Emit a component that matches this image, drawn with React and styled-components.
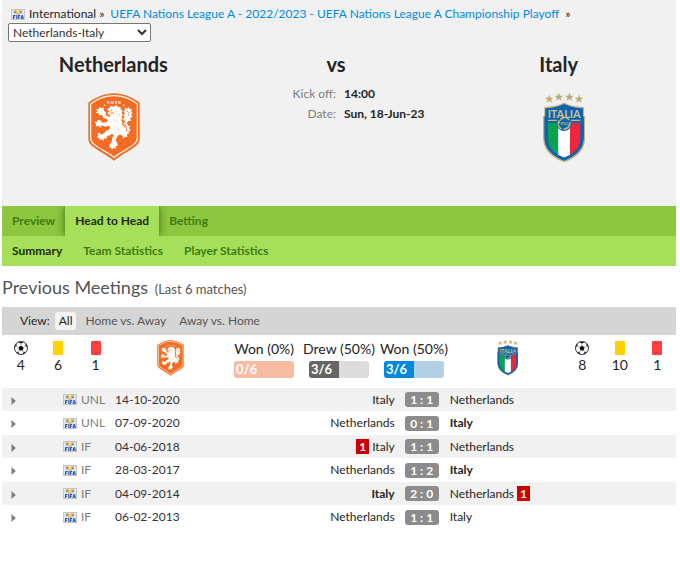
import { useState } from 'react';
import styled, { createGlobalStyle } from 'styled-components';

const GlobalStyle = createGlobalStyle`
  * {
    box-sizing: border-box;
  }

  body {
    margin: 0;
    padding: 0 4px 0 2px;
    background: #fff;
    color: #242424;
    font: 12px/16px Lato, 'Open Sans', sans-serif;
  }

  button,
  select {
    font: inherit;
  }
`;

const Header = styled.header`
  min-height: 206px;
  padding-top: 6px;
  background: #f1f1f1;
`;

const Breadcrumb = styled.nav`
  display: flex;
  align-items: center;
  gap: 4px;
  padding-left: 9px;
  white-space: nowrap;
`;

const CrumbLink = styled.a`
  padding: 0 2px;
  color: #0089dd;
  text-decoration: none;
`;

const MatchSelect = styled.select`
  display: block;
  width: 143px;
  height: 19px;
  margin: 1px 0 0 6px;
  padding: 0;
  border: 1px solid #767676;
  border-radius: 2px;
  background: #fff;
  color: #333;
`;

const Teams = styled.div`
  display: grid;
  grid-template-columns: repeat(3, 1fr);
  padding: 10px 6px 0 0;
  text-align: center;
`;

const TeamName = styled.h2`
  margin: 0 0 17px;
  font-size: 20px;
  line-height: 24px;
  font-weight: 700;
`;

const Badge = styled.div`
  padding-left: ${({ $away }) => ($away ? '10px' : '2px')};
`;

const Versus = styled.h2`
  margin: 0 0 8px;
  font-size: 20px;
  line-height: 24px;
`;

const Info = styled.dl`
  display: grid;
  grid-template-columns: 1fr 1fr;
  margin: 0;
  line-height: 20px;

  dt {
    color: #7c7c7c;
    text-align: right;
  }

  dd {
    margin: 0;
    padding-left: 8px;
    font-weight: 700;
    text-align: left;
    white-space: nowrap;
  }
`;

const Tabs = styled.nav`
  display: flex;
  height: 30px;
  background: #8dc63f;
`;

const Tab = styled.a`
  padding: 0 10px;
  line-height: 30px;
  font-weight: 700;
  text-decoration: none;
  color: ${({ $active }) => ($active ? '#1c2a0c' : '#3f7a10')};
  background: ${({ $active }) => ($active ? '#a6e05a' : 'transparent')};
  box-shadow: ${({ $active }) =>
    $active ? '0 0 8px rgba(30, 70, 0, 0.7)' : 'none'};
  clip-path: inset(0 -10px);
`;

const SubTabs = styled(Tabs)`
  position: relative;
  background: #a6e05a;
`;

const SubTab = styled(Tab)`
  padding: 0 11px 0 10px;
  background: none;
  box-shadow: none;
`;

const Title = styled.h1`
  margin: 9px 0 6px;
  font-size: 18px;
  line-height: 24px;
  font-weight: 400;
  color: #555;

  small {
    margin-left: 2px;
    font-size: 13px;
  }
`;

const ViewBar = styled.div`
  display: flex;
  align-items: center;
  gap: 5px;
  height: 28px;
  padding-left: 18px;
  background: #d5d5d5;
`;

const ViewButton = styled.button`
  height: 18px;
  padding: 0 4px;
  border: 0;
  border-radius: 3px;
  line-height: 18px;
  background: ${({ $active }) => ($active ? '#f4f4f4' : 'transparent')};
  color: ${({ $active }) => ($active ? '#242424' : '#555')};
  cursor: pointer;
`;

const Stats = styled.section`
  display: grid;
  grid-template-columns: 1fr 1fr 2fr 1fr 1fr;
  height: 53px;
  padding-top: 5px;
  text-align: center;
`;

const Thirds = styled.div`
  display: grid;
  grid-template-columns: repeat(3, 1fr);
`;

const Count = styled.div`
  display: flex;
  flex-direction: column;
  align-items: center;
  font-size: 14px;
  line-height: 20px;

  svg {
    margin-top: 1px;
  }
`;

const Card = styled.span`
  width: 10px;
  height: 14px;
  margin-top: 1px;
  border-radius: 1px;
  background: ${({ color }) => color};
`;

const Outcome = styled.div`
  display: flex;
  flex-direction: column;
  align-items: center;
  gap: 3px;
  font-size: 14px;
  line-height: 18px;
  white-space: nowrap;
`;

const Bar = styled.div`
  width: 60px;
  height: 17px;
  border-radius: 3px;
  overflow: hidden;
  background: ${({ $track }) => $track};
`;

const Fill = styled.div`
  height: 17px;
  padding-left: 2px;
  font-size: 13px;
  line-height: 16px;
  font-weight: 700;
  text-align: left;
  color: #fff;
  background: ${({ $fill }) => $fill};
`;

const Matches = styled.table`
  width: 100%;
  table-layout: fixed;
  border-collapse: collapse;

  tr {
    height: 24px;
  }

  tr:nth-child(odd) {
    height: 23px;
    background: #f1f1f1;
  }

  td {
    padding: 0;
    white-space: nowrap;
  }
`;

const Col = styled.col`
  width: ${({ $width }) => $width};
`;

const Expand = styled.button`
  display: block;
  height: 16px;
  padding: 1px 0 0 9px;
  border: 0;
  background: none;
  cursor: pointer;
`;

const Competition = styled.div`
  display: flex;
  align-items: center;
  gap: 4px;
  padding-left: 2px;
  color: #7c7c7c;
`;

const DateCell = styled.td`
  color: #333;
`;

const Side = styled.div`
  display: flex;
  align-items: center;
  justify-content: ${({ $home }) => ($home ? 'flex-end' : 'flex-start')};
  gap: 3px;
  padding: ${({ $home }) => ($home ? '0 3px 0 0' : '0')};
  font-weight: ${({ $winner }) => ($winner ? 700 : 400)};
`;

const RedCard = styled.span`
  width: 13px;
  height: 15px;
  line-height: 15px;
  text-align: center;
  font-weight: 700;
  color: #fff;
  background: #c00;
`;

const Score = styled.div`
  width: 34px;
  height: 15px;
  margin-left: 7px;
  border-radius: 3px;
  line-height: 15px;
  font-weight: 700;
  text-align: center;
  color: #fff;
  background: #8c8c8c;
`;

const FifaIcon = () => (
  <svg width="14" height="11" viewBox="0 0 14 11" aria-hidden="true">
    <rect x=".5" y=".5" width="13" height="10" fill="#dfe6f0" stroke="#c3c6cc" />
    <circle cx="4.5" cy="2.8" r="1.9" fill="#f0b92f" />
    <circle cx="9.3" cy="2.8" r="1.9" fill="#f0b92f" />
    <path d="M3 2.2h2v1.6H3zM9 2.5h2V4H9z" fill="#5c95d3" />
    <path d="M5.5 4.5h3v1h-3z" fill="#e78b45" />
    <path
      d="M2.5 10V6.5h2M2.5 8.2h1.6M5.8 6v4M7.3 10V6.5h1.9M7.3 8.2h1.5M10 10l.9-3.5h.7l.7 3.5M10.3 9h1.8"
      fill="none"
      stroke="#1f4fa3"
    />
  </svg>
);

const BallIcon = () => (
  <svg width="14" height="14" viewBox="0 0 14 14" aria-hidden="true">
    <circle cx="7" cy="7" r="6.5" fill="#fff" stroke="#222" strokeWidth=".9" />
    <path d="M7 4.5l2.6 1.9-1 3H5.4l-1-3z" fill="#111" />
    <path
      d="M4.6.9L7 2.2 9.4.9M.7 6l1.7-1.2L2 2.7M13.3 6l-1.7-1.2.4-2.1M2.3 11.4l2-.2.6 2M11.7 11.4l-2-.2-.6 2"
      fill="#222"
      stroke="#222"
      strokeWidth=".7"
    />
    <path
      d="M7 2.2v2.3M2.4 4.8l2 1.6M11.6 4.8l-2 1.6M4.3 11.2l1.1-1.8M9.7 11.2L8.6 9.4"
      stroke="#777"
      strokeWidth=".6"
    />
  </svg>
);

const CaretIcon = () => (
  <svg width="5" height="8" viewBox="0 0 5 8" aria-hidden="true">
    <path d="M.5 0L4.8 4 .5 8z" fill="#7c7c7c" />
  </svg>
);

const NetherlandsCrest = ({ height }) => (
  <svg height={height} viewBox="0 0 156 204" role="img" aria-label="Netherlands">
    <path
      d="M78 1C104 1 132 12 155 29V137C155 164 112 174 78 203C44 174 1 164 1 137V29C24 12 52 1 78 1Z"
      fill="#f36c21"
    />
    <path
      d="M78 8C102 8 128 18 148 33V136C148 157 110 168 78 193C46 168 8 157 8 136V33C28 18 54 8 78 8Z"
      fill="none"
      stroke="#fff"
      strokeWidth="3.5"
    />
    <text x="78" y="34" textAnchor="middle" fontFamily="Lato, sans-serif" fontSize="12" fontWeight="700" fill="#fff">
      K N V B
    </text>
    <path d="M47 36l4-2 1 4-4 1zM106 34l4 2-2 4-4-2z" fill="#fff" />
    <path
      d="M57 49L64 45 68 39 77 41 85 37 90 42 98 43 98 49 104 52 101 59 105 65 101 70 103 77 99 80 104 88 101 94 108 100 111 112 107 121 99 125 91 126 86 134 83 143 88 149 89 159 84 158 82 168 76 164 72 170 68 163 63 164 65 154 70 149 73 136 77 126 72 122 66 127 59 128 54 137 48 136 46 144 41 138 35 142 34 135 27 134 31 126 28 121 36 120 40 125 49 120 54 113 63 110 67 101 61 98 52 101 42 97 37 104 31 99 23 100 25 93 20 88 27 86 29 80 37 82 43 89 54 88 60 84 57 78 47 75 42 66 34 67 32 61 24 60 28 54 24 48 32 48 35 42 41 46 47 43 47 52 53 58 55 68 64 72 69 65 61 65 58 60 64 56Z"
      fill="#fff"
    />
    <path
      d="M104 109L112 101 106 92 112 84 103 80 110 72 105 65 112 63 106 55 112 51 108 44 117 47 122 41 124 48 132 47 129 55 134 60 129 65 133 71 126 76 130 83 121 84 116 91 121 98 128 99 122 105 129 112 121 114 124 121 117 123 118 132 111 131 105 137 104 129 97 124Z"
      fill="#fff"
    />
    <path
      d="M116 55C125 55 125 64 119 70M111 88C110 95 118 102 115 116M67 53l6-3M66 61l9-2 3 5"
      fill="none"
      stroke="#f58549"
      strokeWidth="3"
    />
    <path
      d="M85 51l5 9-4 8M93 61l3 12M76 77l6 10M86 81l7 11M75 96l7 12M88 104l5 12M64 83l7 4"
      fill="none"
      stroke="#fbc9ab"
      strokeWidth="2"
    />
  </svg>
);

const starPath = 'l3 8 8 0-6 5 2 8-7-5-7 5 2-8-6-5 8 0z';

const ItalyCrest = ({ height }) => (
  <svg height={height} viewBox="0 0 128 212" role="img" aria-label="Italy">
    <path
      d={`M19 7${starPath}M48 1${starPath}M80 1${starPath}M109 7${starPath}`}
      fill="#c0aa70"
      stroke="#c0aa70"
      strokeWidth="1.5"
    />
    <path
      d="M4 42Q38 42 64 29Q90 42 124 42V67L128 72V134Q128 187 64 210Q0 187 0 134V72L4 67Z"
      fill="#c5b27e"
    />
    <path
      d="M7 46Q39 45 64 33Q89 45 121 46V69L124 74V134Q124 182 64 205Q4 182 4 134V74L7 69Z"
      fill="#0b64b0"
    />
    <path d="M15 90H46V187Q15 171 15 134Z" fill="#0ba14d" />
    <path d="M46 90H82V187L64 195 46 187Z" fill="#fff" />
    <path d="M82 90H113V134Q113 171 82 187Z" fill="#ee253b" />
    <path d="M15 83H43M85 83H113" stroke="#cdb67b" strokeWidth="4" />
    <circle cx="64" cy="92" r="23" fill="#0b64b0" />
    <circle
      cx="64"
      cy="92"
      r="18"
      fill="none"
      stroke="#cdb67b"
      strokeWidth="4"
      strokeDasharray="30 5"
    />
    <path
      d="M49 92Q50 79 64 77M79 92Q78 106 64 108"
      fill="none"
      stroke="#cdb67b"
      strokeWidth="3"
    />
    <text x="64" y="96" textAnchor="middle" fontFamily="Lato, sans-serif" fontSize="10" fontWeight="700" fill="#cdb67b">
      FIGC
    </text>
    <text x="64" y="75" textAnchor="middle" fontFamily="Lato, sans-serif" fontSize="33" fontWeight="700" fill="#d3c08b">
      ITALIA
    </text>
  </svg>
);

const tabs = ['Preview', 'Head to Head', 'Betting'];
const subTabs = ['Summary', 'Team Statistics', 'Player Statistics'];
const views = ['All', 'Home vs. Away', 'Away vs. Home'];

const outcomes = [
  { label: 'Won (0%)', count: 0, track: '#f8bca3', fill: '#f36c21' },
  { label: 'Drew (50%)', count: 3, track: '#dcdcdc', fill: '#666' },
  { label: 'Won (50%)', count: 3, track: '#b3d1e4', fill: '#0089dd' },
];

const matches = [
  { comp: 'UNL', date: '14-10-2020', home: 'Italy', away: 'Netherlands', score: [1, 1] },
  { comp: 'UNL', date: '07-09-2020', home: 'Netherlands', away: 'Italy', score: [0, 1] },
  { comp: 'IF', date: '04-06-2018', home: 'Italy', away: 'Netherlands', score: [1, 1], homeReds: 1 },
  { comp: 'IF', date: '28-03-2017', home: 'Netherlands', away: 'Italy', score: [1, 2] },
  { comp: 'IF', date: '04-09-2014', home: 'Italy', away: 'Netherlands', score: [2, 0], awayReds: 1 },
  { comp: 'IF', date: '06-02-2013', home: 'Netherlands', away: 'Italy', score: [1, 1] },
];

const Discipline = ({ goals, yellows, reds }) => (
  <Thirds>
    <Count>
      <BallIcon />
      {goals}
    </Count>
    <Count>
      <Card color="#ffd100" />
      {yellows}
    </Count>
    <Count>
      <Card color="#ff3f3f" />
      {reds}
    </Count>
  </Thirds>
);

const App = () => {
  const [view, setView] = useState('All');

  return (
    <>
      <GlobalStyle />
      <Header>
        <Breadcrumb>
          <FifaIcon />
          <span>International »</span>
          <CrumbLink href="#tournament">
            UEFA Nations League A - 2022/2023 - UEFA Nations League A
            Championship Playoff
          </CrumbLink>
          <span>»</span>
        </Breadcrumb>
        <MatchSelect aria-label="Match">
          <option>Netherlands-Italy</option>
        </MatchSelect>
        <Teams>
          <div>
            <TeamName>Netherlands</TeamName>
            <Badge>
              <NetherlandsCrest height={68} />
            </Badge>
          </div>
          <div>
            <Versus>vs</Versus>
            <Info>
              <dt>Kick off:</dt>
              <dd>14:00</dd>
              <dt>Date:</dt>
              <dd>Sun, 18-Jun-23</dd>
            </Info>
          </div>
          <div>
            <TeamName>Italy</TeamName>
            <Badge $away>
              <ItalyCrest height={70} />
            </Badge>
          </div>
        </Teams>
      </Header>

      <Tabs>
        {tabs.map((tab) => (
          <Tab key={tab} href="#tab" $active={tab === 'Head to Head'}>
            {tab}
          </Tab>
        ))}
      </Tabs>
      <SubTabs>
        {subTabs.map((tab) => (
          <SubTab key={tab} href="#subtab" $active={tab === 'Summary'}>
            {tab}
          </SubTab>
        ))}
      </SubTabs>

      <Title>
        Previous Meetings <small>(Last 6 matches)</small>
      </Title>
      <ViewBar>
        <span>View:</span>
        {views.map((name) => (
          <ViewButton
            key={name}
            $active={view === name}
            onClick={() => setView(name)}
          >
            {name}
          </ViewButton>
        ))}
      </ViewBar>

      <Stats>
        <Discipline goals={4} yellows={6} reds={1} />
        <div>
          <NetherlandsCrest height={36} />
        </div>
        <Thirds>
          {outcomes.map(({ label, count, track, fill }, index) => (
            <Outcome key={index}>
              {label}
              <Bar $track={track}>
                <Fill
                  $fill={count ? fill : 'none'}
                  style={{ width: count ? `${(count / 6) * 100}%` : 'auto' }}
                >
                  {count}/6
                </Fill>
              </Bar>
            </Outcome>
          ))}
        </Thirds>
        <div>
          <ItalyCrest height={36} />
        </div>
        <Discipline goals={8} yellows={10} reds={1} />
      </Stats>

      <Matches>
        <colgroup>
          <Col $width="59px" />
          <Col $width="54px" />
          <Col $width="67px" />
          <Col $width="32%" />
          <Col $width="52px" />
          <Col />
        </colgroup>
        <tbody>
          {matches.map((match) => (
            <tr key={match.date}>
              <td>
                <Expand aria-label="Show match details">
                  <CaretIcon />
                </Expand>
              </td>
              <td>
                <Competition>
                  <FifaIcon />
                  {match.comp}
                </Competition>
              </td>
              <DateCell>{match.date}</DateCell>
              <td>
                <Side $home $winner={match.score[0] > match.score[1]}>
                  {match.homeReds && <RedCard>{match.homeReds}</RedCard>}
                  {match.home}
                </Side>
              </td>
              <td>
                <Score>
                  {match.score[0]} : {match.score[1]}
                </Score>
              </td>
              <td>
                <Side $winner={match.score[1] > match.score[0]}>
                  {match.away}
                  {match.awayReds && <RedCard>{match.awayReds}</RedCard>}
                </Side>
              </td>
            </tr>
          ))}
        </tbody>
      </Matches>
    </>
  );
};

export default App;
